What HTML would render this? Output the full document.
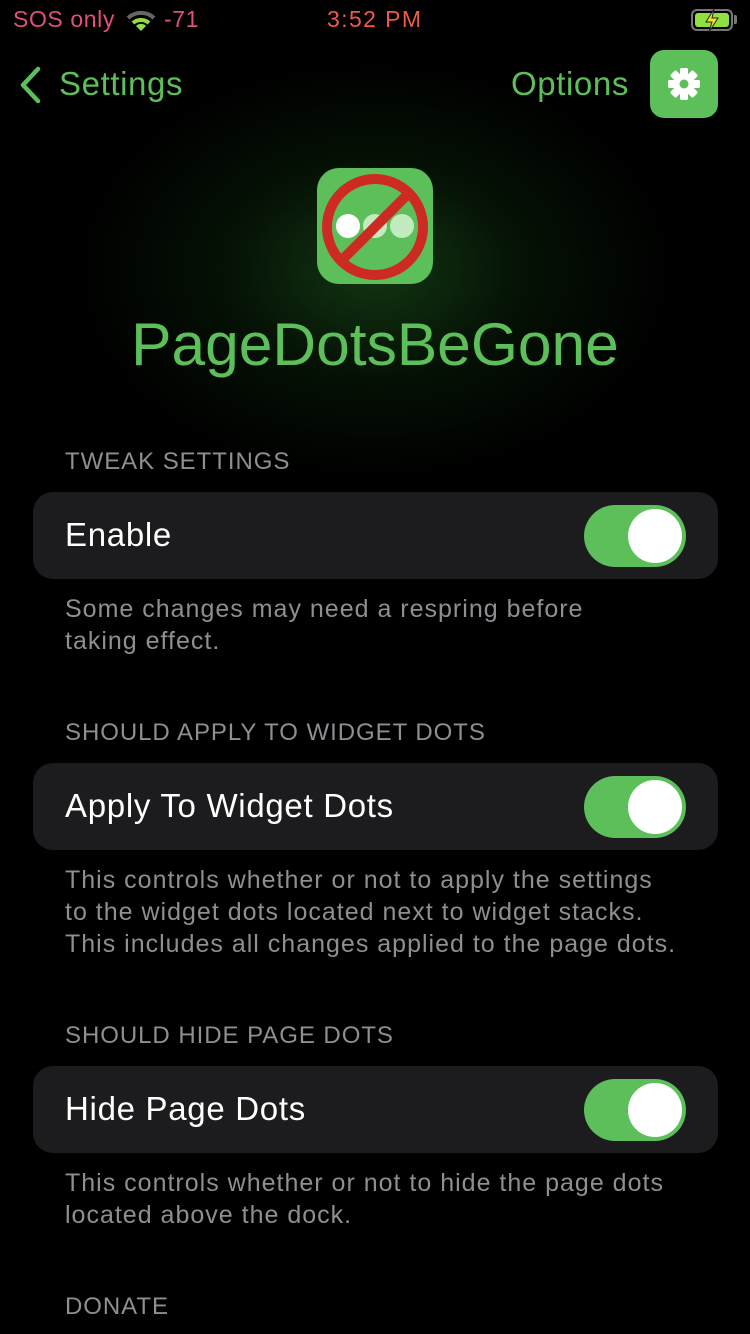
<!DOCTYPE html>
<html><head><meta charset="utf-8"><style>
*{margin:0;padding:0;box-sizing:border-box}
body{width:750px;height:1334px;background:#000;overflow:hidden;position:relative;font-family:"Liberation Sans",sans-serif;}
.a{position:absolute;white-space:nowrap}
.glow{position:absolute;left:75px;top:60px;width:600px;height:420px;background:radial-gradient(ellipse at 50% 50%,rgba(40,120,40,0.45) 0%,rgba(20,70,20,0.25) 35%,rgba(0,0,0,0) 70%)}
.hdr{font-size:24px;color:#8e8e93;left:65px;letter-spacing:0.95px}
.cell{position:absolute;left:33px;width:685px;height:87px;background:#1c1c1e;border-radius:20px}
.cell span{position:absolute;left:32px;top:24px;font-size:33px;color:#fff;letter-spacing:0.7px}
.tg{position:absolute;left:551px;top:13px;width:102px;height:62px;border-radius:31px;background:#5cbf5a}
.tg:after{content:"";position:absolute;right:4px;top:4px;width:54px;height:54px;border-radius:50%;background:#fff}
.ft{font-size:25px;color:#8e8e93;left:65px;line-height:32px;letter-spacing:1px}
</style></head><body>
<div class="glow"></div>
<div class="a" style="left:13px;top:6px;font-size:23px;color:#e0507a;letter-spacing:0.6px">SOS only</div>
<svg class="a" style="left:126px;top:10px" width="30" height="22" viewBox="0 0 30 22"><path d="M2 8 A19 19 0 0 1 28 8" stroke="#666" stroke-width="4" fill="none"/><path d="M7 13 A12 12 0 0 1 23 13" stroke="#8fe040" stroke-width="4" fill="none"/><path d="M15 21 L10 16 A7 7 0 0 1 20 16 Z" fill="#8fe040"/></svg>
<div class="a" style="left:164px;top:6px;font-size:23px;color:#e0507a;letter-spacing:0.6px">-71</div>
<div class="a" style="left:327px;top:6px;font-size:23px;color:#ee5a4a;letter-spacing:1.4px">3:52 PM</div>
<div class="a" style="left:691px;top:9px;width:42px;height:22px;border:2px solid #777;border-radius:6px;padding:2px"><div style="width:100%;height:100%;background:#8fe040;border-radius:3px"></div></div>
<div class="a" style="left:734px;top:15px;width:3px;height:9px;background:#777;border-radius:0 2px 2px 0"></div>
<svg class="a" style="left:703px;top:8px" width="18" height="25" viewBox="0 0 18 25"><path d="M11 1 L3 14 H9 L6 24 L15 10 H9 Z" fill="#f5e030" stroke="#222" stroke-width="1"/></svg>
<svg class="a" style="left:18px;top:66px" width="24" height="38" viewBox="0 0 24 38"><path d="M20 3 L5 19 L20 35" stroke="#5cbf5a" stroke-width="4.5" fill="none" stroke-linecap="round" stroke-linejoin="round"/></svg>
<div class="a" style="left:59px;top:65px;font-size:33px;color:#5cbf5a;letter-spacing:0.6px">Settings</div>
<div class="a" style="left:511px;top:65px;font-size:33px;color:#5cbf5a;letter-spacing:0.6px">Options</div>
<div class="a" style="left:650px;top:50px;width:68px;height:68px;background:#5cbf5a;border-radius:14px"></div>
<svg class="a" style="left:666px;top:66px" width="36" height="36" viewBox="-18 -18 36 36"><g fill="#fff"><circle r="11"/><rect x="-4" y="-16" width="8" height="32" rx="1.5"/><rect x="-4" y="-16" width="8" height="32" rx="1.5" transform="rotate(45)"/><rect x="-4" y="-16" width="8" height="32" rx="1.5" transform="rotate(90)"/><rect x="-4" y="-16" width="8" height="32" rx="1.5" transform="rotate(135)"/></g><circle r="4.5" fill="#5cbf5a"/></svg>
<svg class="a" style="left:317px;top:168px" width="116" height="116" viewBox="0 0 116 116"><rect width="116" height="116" rx="22" fill="#5cbf5a"/><circle cx="31" cy="58" r="12" fill="#fff"/><circle cx="58" cy="58" r="12" fill="#c0ecc0"/><circle cx="85" cy="58" r="12" fill="#c0ecc0"/><circle cx="58" cy="59" r="48" stroke="#cc2a22" stroke-width="10" fill="none"/><line x1="92" y1="25" x2="24" y2="93" stroke="#cc2a22" stroke-width="10"/></svg>
<div class="a" style="left:0;width:750px;text-align:center;top:309px;font-size:60.5px;color:#5cbf5a">PageDotsBeGone</div>
<div class="a hdr" style="top:448px">TWEAK SETTINGS</div>
<div class="cell" style="top:492px"><span>Enable</span><div class="tg"></div></div>
<div class="a ft" style="top:593px">Some changes may need a respring before<br>taking effect.</div>
<div class="a hdr" style="top:719px">SHOULD APPLY TO WIDGET DOTS</div>
<div class="cell" style="top:763px"><span>Apply To Widget Dots</span><div class="tg"></div></div>
<div class="a ft" style="top:864px">This controls whether or not to apply the settings<br>to the widget dots located next to widget stacks.<br>This includes all changes applied to the page dots.</div>
<div class="a hdr" style="top:1022px">SHOULD HIDE PAGE DOTS</div>
<div class="cell" style="top:1066px"><span>Hide Page Dots</span><div class="tg"></div></div>
<div class="a ft" style="top:1167px">This controls whether or not to hide the page dots<br>located above the dock.</div>
<div class="a hdr" style="top:1293px">DONATE</div>
</body></html>
